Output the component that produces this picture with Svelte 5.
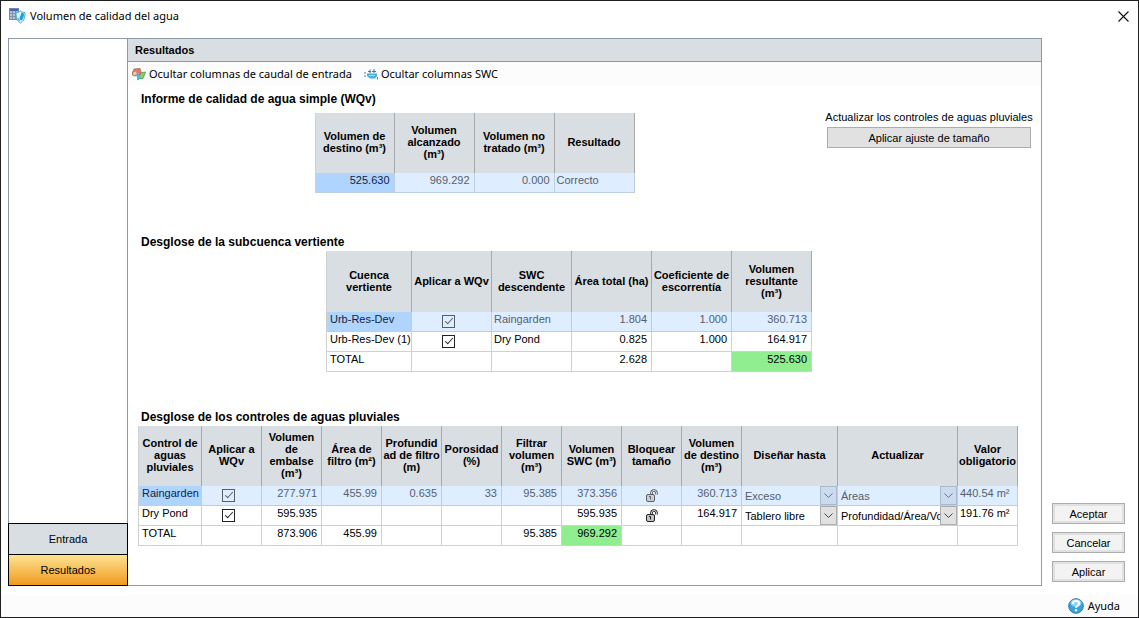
<script lang="ts">
	type Cell = { value?: string; kind?: 'text' | 'number' | 'check' | 'lock' | 'select'; total?: boolean };
	type Table = { id: string; title: string; widths: number[]; head: string[]; rows: Cell[][] };

	const text = (value = ''): Cell => ({ value, kind: 'text' });
	const num = (value = '', total = false): Cell => ({ value, kind: 'number', total });
	const check = (): Cell => ({ kind: 'check' });
	const lock = (): Cell => ({ kind: 'lock' });
	const select = (value: string): Cell => ({ value, kind: 'select' });

	const tables: Table[] = [
		{
			id: 'report',
			title: 'Informe de calidad de agua simple (WQv)',
			widths: [79, 80, 80, 80],
			head: [
				'Volumen de\ndestino (m³)',
				'Volumen\nalcanzado\n(m³)',
				'Volumen no\ntratado (m³)',
				'Resultado'
			],
			rows: [[num('525.630'), num('969.292'), num('0.000'), text('Correcto')]]
		},
		{
			id: 'catchment',
			title: 'Desglose de la subcuenca vertiente',
			widths: [85, 80, 80, 80, 80, 80],
			head: [
				'Cuenca\nvertiente',
				'Aplicar a WQv',
				'SWC\ndescendente',
				'Área total (ha)',
				'Coeficiente de\nescorrentía',
				'Volumen\nresultante\n(m³)'
			],
			rows: [
				[text('Urb-Res-Dev'), check(), text('Raingarden'), num('1.804'), num('1.000'), num('360.713')],
				[text('Urb-Res-Dev (1)'), check(), text('Dry Pond'), num('0.825'), num('1.000'), num('164.917')],
				[text('TOTAL'), text(), text(), num('2.628'), num(), num('525.630', true)]
			]
		},
		{
			id: 'controls',
			title: 'Desglose de los controles de aguas pluviales',
			widths: [63, 60, 60, 60, 60, 60, 60, 60, 60, 60, 96, 120, 60],
			head: [
				'Control de\naguas\npluviales',
				'Aplicar a\nWQv',
				'Volumen\nde\nembalse\n(m³)',
				'Área de\nfiltro (m²)',
				'Profundid\nad de filtro\n(m)',
				'Porosidad\n(%)',
				'Filtrar\nvolumen\n(m³)',
				'Volumen\nSWC (m³)',
				'Bloquear\ntamaño',
				'Volumen\nde destino\n(m³)',
				'Diseñar hasta',
				'Actualizar',
				'Valor\nobligatorio'
			],
			rows: [
				[
					text('Raingarden'), check(), num('277.971'), num('455.99'), num('0.635'), num('33'),
					num('95.385'), num('373.356'), lock(), num('360.713'), select('Exceso'),
					select('Áreas'), text('440.54 m²')
				],
				[
					text('Dry Pond'), check(), num('595.935'), num(), num(), num(),
					num(), num('595.935'), lock(), num('164.917'), select('Tablero libre'),
					select('Profundidad/Área/Volumen'), text('191.76 m²')
				],
				[
					text('TOTAL'), text(), num('873.906'), num('455.99'), num(), num(),
					num('95.385'), num('969.292', true), text(), num(), text(), text(), text()
				]
			]
		}
	];

	const tabs = ['Entrada', 'Resultados'];
	let active = $state('Resultados');
</script>

{#snippet grid(table: Table)}
	<table class="grid" aria-labelledby={table.id}>
		<colgroup>
			{#each table.widths as width}
				<col style="width: {width}px" />
			{/each}
		</colgroup>
		<thead>
			<tr>
				{#each table.head as label}
					<th scope="col">{label}</th>
				{/each}
			</tr>
		</thead>
		<tbody>
			{#each table.rows as row, r}
				<tr class:selected={r === 0}>
					{#each row as cell, c}
						<td class={cell.kind} class:total={cell.total}>
							{#if cell.kind === 'check'}
								<input type="checkbox" checked aria-label="{table.head[c]} {row[0].value}" />
							{:else if cell.kind === 'lock'}
								<button class="lock-btn" aria-label="{table.head[c]} {row[0].value}">
									<svg width="12" height="13" viewBox="0 0 12 13" fill="none" stroke="#222">
										<path d="M5.5 6V4a2.5 2.5 0 0 1 5 0V5.5" stroke-width="2.6" />
										<path d="M5.5 6V4a2.5 2.5 0 0 1 5 0V5.5" stroke="#fff" stroke-width="0.8" />
										<rect x="0.5" y="5.500" width="8" height="7" rx="1.5" fill="#c4c4c4" />
										<path d="M3 7.5h1.5v3" />
									</svg>
								</button>
							{:else if cell.kind === 'select'}
								<div class="combo">
									<select aria-label="{table.head[c]} {row[0].value}">
										<option>{cell.value}</option>
									</select>
									<span class="arrow">
										<svg width="9" height="6" viewBox="0 0 9 6" fill="none" stroke="#444">
											<path d="M0.5 0.5l4 4 4-4" />
										</svg>
									</span>
								</div>
							{:else}
								{cell.value}
							{/if}
						</td>
					{/each}
				</tr>
			{/each}
		</tbody>
	</table>
{/snippet}

<div class="window">
	<header class="titlebar">
		<svg width="17" height="16" viewBox="0 0 17 16">
			<rect x="0.5" y="0.5" width="9" height="11" fill="#b4c4dc" stroke="#6f87ae" />
			<rect x="1" y="1" width="8" height="2" fill="#46699f" />
			<path d="M3.5 3v8M6.5 3v8M1 5.5h8M1 8.5h8" stroke="#7d93b8" />
			<path d="M7 4.5c2 0 3-.5 4.5-1.5 1 1 2.5 1.5 4.5 1.5 0 5-1 8.5-4.5 10.5C8 13 7 10 7 4.5z" fill="#dff4fd" stroke="#39a9dc" />
			<path d="M12.5 4.5c2 .5 2.5 1 2.5 1.5 0 3-1 5-2.5 6.5-1.5-.5-2-1-2-2s1.500-3 2-6zM8.5 9.5c1 0 1.5 2.5 3 4-2-.5-2.5-2-3-4z" fill="#1fa0dc" />
		</svg>
		<h1>Volumen de calidad del agua</h1>
		<button class="close" aria-label="Cerrar">
			<svg width="11" height="11" viewBox="0 0 11 11" stroke="#111" stroke-width="1.1">
				<path d="M0.5 0.5l10 10M10.5 0.5l-10 10" />
			</svg>
		</button>
	</header>

	<div class="body">
		<div class="frame">
			<nav class="sidebar">
				{#each tabs as tab}
					<button class="tab" class:active={active === tab} onclick={() => (active = tab)}>
						{tab}
					</button>
				{/each}
			</nav>

			<main class="panel">
				<h2 class="panel-title">Resultados</h2>
				<div class="toolbar">
					<button class="tool">
						<svg width="14" height="12" viewBox="0 0 14 12">
							<path d="M7 5l6.5-1-2.5 6.5H6z" fill="#8ccc6a" stroke="#4a9a44" stroke-width="0.8" />
							<path d="M0.5 4.5L2 1l6-.5 1 3L8 7 3 8 0.5 7z" fill="#dc8069" stroke="#a9584c" stroke-width="0.7" />
							<path d="M1 5l2.5-1.5L5 6 2 7.5z" fill="#f6cfb4" />
							<path d="M3.5 6.5l3-.5 1 2-.5 4H5V8.5z" fill="#42b9e8" />
						</svg>
						Ocultar columnas de caudal de entrada
					</button>
					<button class="tool">
						<svg width="14" height="12" viewBox="0 0 14 12">
							<path d="M0 5h2M0 8h2" stroke="#159bd7" />
							<path d="M4 3.5h3M8 3.5h4M6 1.5v4M10 1v4" fill="none" stroke="#2786b8" />
							<path d="M3 5.5h10V8l-2 2.5H6L3 8z" fill="#40afe0" />
							<path d="M5 7l1.5 1L8 7l1.5 1L11 7" fill="none" stroke="#c8effc" />
							<path d="M13.5 9v2.5" stroke="#159bd7" />
						</svg>
						Ocultar columnas SWC
					</button>
				</div>

				<div class="content">
					<div class="top">
						<section class="report">
							<h3 id={tables[0].id}>{tables[0].title}</h3>
							{@render grid(tables[0])}
						</section>
						<aside class="resize">
							<span id="resize-label">Actualizar los controles de aguas pluviales</span>
							<button class="resize-btn" aria-describedby="resize-label">
								Aplicar ajuste de tamaño
							</button>
						</aside>
					</div>
					<section class="catchment">
						<h3 id={tables[1].id}>{tables[1].title}</h3>
						{@render grid(tables[1])}
					</section>
					<section>
						<h3 id={tables[2].id}>{tables[2].title}</h3>
						{@render grid(tables[2])}
					</section>
				</div>
			</main>
		</div>

		<div class="actions">
			<button class="btn">Aceptar</button>
			<button class="btn">Cancelar</button>
			<button class="btn">Aplicar</button>
		</div>
	</div>

	<footer class="statusbar">
		<a class="help" href="#ayuda">
			<svg width="16" height="16" viewBox="0 0 16 16">
				<circle cx="8" cy="8" r="7.3" fill="#36a4dc" stroke="#2b78ad" />
				<ellipse cx="8" cy="5" rx="5.5" ry="3.8" fill="#8bd2f3" />
				<path d="M4.8 6c0-4 6.4-3.6 6.4-.4 0 2.2-3.2 1.9-3.2 4.2" fill="none" stroke="#fff" stroke-width="2" />
				<circle cx="8" cy="12.2" r="1.2" fill="#fff" />
			</svg>
			Ayuda
		</a>
	</footer>
</div>

<style>
	:global(body) {
		background: #fff;
	}

	.window {
		--frame: #8e9ba6;
		--head: #d9dee2;
		--ui: 'Segoe UI', 'Noto Sans', 'Open Sans', sans-serif;
		box-sizing: border-box;
		display: flex;
		flex-direction: column;
		min-height: 100vh;
		border: 1px solid #1f1f1f;
		background: #fff;
		color: #000;
		font: 11px/14px 'Liberation Sans', Arial, sans-serif;
	}

	button,
	select {
		box-sizing: border-box;
		margin: 0;
		padding: 0;
		border: 0;
		background: none;
		color: inherit;
		font: inherit;
	}

	svg {
		flex: none;
	}

	h1,
	h2,
	h3 {
		margin: 0;
		font-size: 11px;
	}

	.titlebar {
		display: flex;
		align-items: center;
		gap: 4px;
		height: 30px;
		padding: 0 8px;
	}

	.titlebar h1 {
		flex: 1;
		font: 11px/16px var(--ui);
	}

	.close {
		display: flex;
		padding: 1px;
	}

	.body {
		flex: 1;
		display: flex;
		gap: 10px;
		padding: 7px 13px 9px 7px;
	}

	.frame {
		flex: 1;
		display: flex;
		min-width: 0;
	}

	.sidebar {
		box-sizing: border-box;
		display: flex;
		flex-direction: column;
		justify-content: flex-end;
		width: 120px;
		border: 1px solid var(--frame);
	}

	.tab {
		height: 32px;
		margin: 0 -1px -1px;
		border: 1px solid #000;
		background: var(--head);
	}

	.tab.active {
		background: linear-gradient(#fee391, #f09a20);
	}

	.panel {
		flex: 1;
		min-width: 0;
		border: 1px solid var(--frame);
		border-left: 0;
	}

	.panel-title {
		padding: 0 7px;
		border-bottom: 1px solid var(--frame);
		background: var(--head);
		line-height: 22px;
	}

	.toolbar {
		display: flex;
		gap: 12px;
		height: 24px;
		padding: 0 4px;
		background: #fcfcfc;
	}

	.tool {
		display: flex;
		align-items: center;
		gap: 3px;
		font: 11px/16px var(--ui);
	}

	.content {
		padding: 5px 10px 0;
	}

	h3 {
		padding: 0 3px 1px;
		font-size: 12px;
		line-height: 16px;
	}

	.top {
		display: flex;
		gap: 16px;
		padding-bottom: 41px;
	}

	.report {
		flex: 1;
	}

	.report h3 {
		padding-bottom: 6px;
	}

	.report .grid,
	.catchment .grid {
		margin: 0 auto;
	}

	.catchment {
		padding: 0 31px 37px 0;
	}

	.catchment th {
		height: 61px;
	}

	.resize {
		display: flex;
		flex-direction: column;
		gap: 3px;
		width: 204px;
		padding-top: 19px;
	}

	.resize span {
		align-self: center;
		white-space: nowrap;
	}

	.resize-btn {
		height: 21px;
		border: 1px solid #adadad;
		background: #e1e1e1;
	}

	.grid {
		border-left: 1px solid #d0d0d0;
		border-spacing: 0;
		table-layout: fixed;
		width: 0;
	}

	th {
		box-sizing: border-box;
		height: 60px;
		padding: 0 0 2px;
		border-right: 1px solid #a6a8aa;
		background: var(--head);
		line-height: 12px;
		text-align: center;
		white-space: pre;
		overflow: hidden;
	}

	td {
		box-sizing: border-box;
		height: 20px;
		padding: 0 2px 5px;
		border: solid #d0d0d0;
		border-width: 0 1px 1px 0;
		white-space: nowrap;
		vertical-align: top;
		overflow: hidden;
	}

	td:first-child {
		padding-left: 3px;
	}

	.number {
		padding-right: 4px;
		text-align: right;
	}

	.total {
		background: #90ee90;
	}

	.check,
	.lock,
	.select {
		padding: 0;
		line-height: 0;
		text-align: center;
	}

	.check {
		padding-right: 6px;
	}

	.selected td {
		border-color: #bccee2;
		background: #deedff;
		color: #555f6c;
	}

	.selected td:first-child {
		background: #afd5ff;
		color: #10233f;
	}

	.selected .lock-btn,
	.selected .arrow,
	.selected input {
		opacity: 0.7;
	}

	.selected .arrow {
		border-color: #8fa5bd;
		background: #c3d3e4;
	}

	input {
		appearance: none;
		box-sizing: border-box;
		display: inline-flex;
		justify-content: center;
		width: 13px;
		height: 13px;
		margin: 3px 0 0;
		border: 1px solid #222;
		background: #fff;
	}

	.selected input {
		background: transparent;
	}

	input:checked::after {
		content: '';
		width: 3px;
		height: 7px;
		border: solid #222;
		border-width: 0 1px 1px 0;
		transform: rotate(42deg);
	}

	.lock-btn {
		padding-top: 3px;
	}

	.combo {
		position: relative;
		display: flex;
		height: 19px;
	}

	.combo select {
		appearance: none;
		width: 100%;
		padding: 0 17px 0 3px;
		line-height: 14px;
	}

	.arrow {
		position: absolute;
		top: 0;
		right: 0;
		bottom: 0;
		display: flex;
		align-items: center;
		justify-content: center;
		width: 15px;
		border: 1px solid #adadad;
		background: #e1e1e1;
		pointer-events: none;
	}

	.actions {
		display: flex;
		flex-direction: column;
		justify-content: flex-end;
		gap: 8px;
		width: 73px;
		padding-bottom: 4px;
	}

	.btn {
		height: 21px;
		border: 1px solid #adadad;
		background: #f3f3f3;
		box-shadow: inset 0 0 0 2px #e1e1e1;
	}

	.statusbar {
		display: flex;
		justify-content: flex-end;
		padding: 3px 18px 3px 0;
		background: #fcfcfc;
	}

	.help {
		display: flex;
		align-items: center;
		gap: 4px;
		color: inherit;
		font: 11px/16px var(--ui);
		text-decoration: none;
	}
</style>
